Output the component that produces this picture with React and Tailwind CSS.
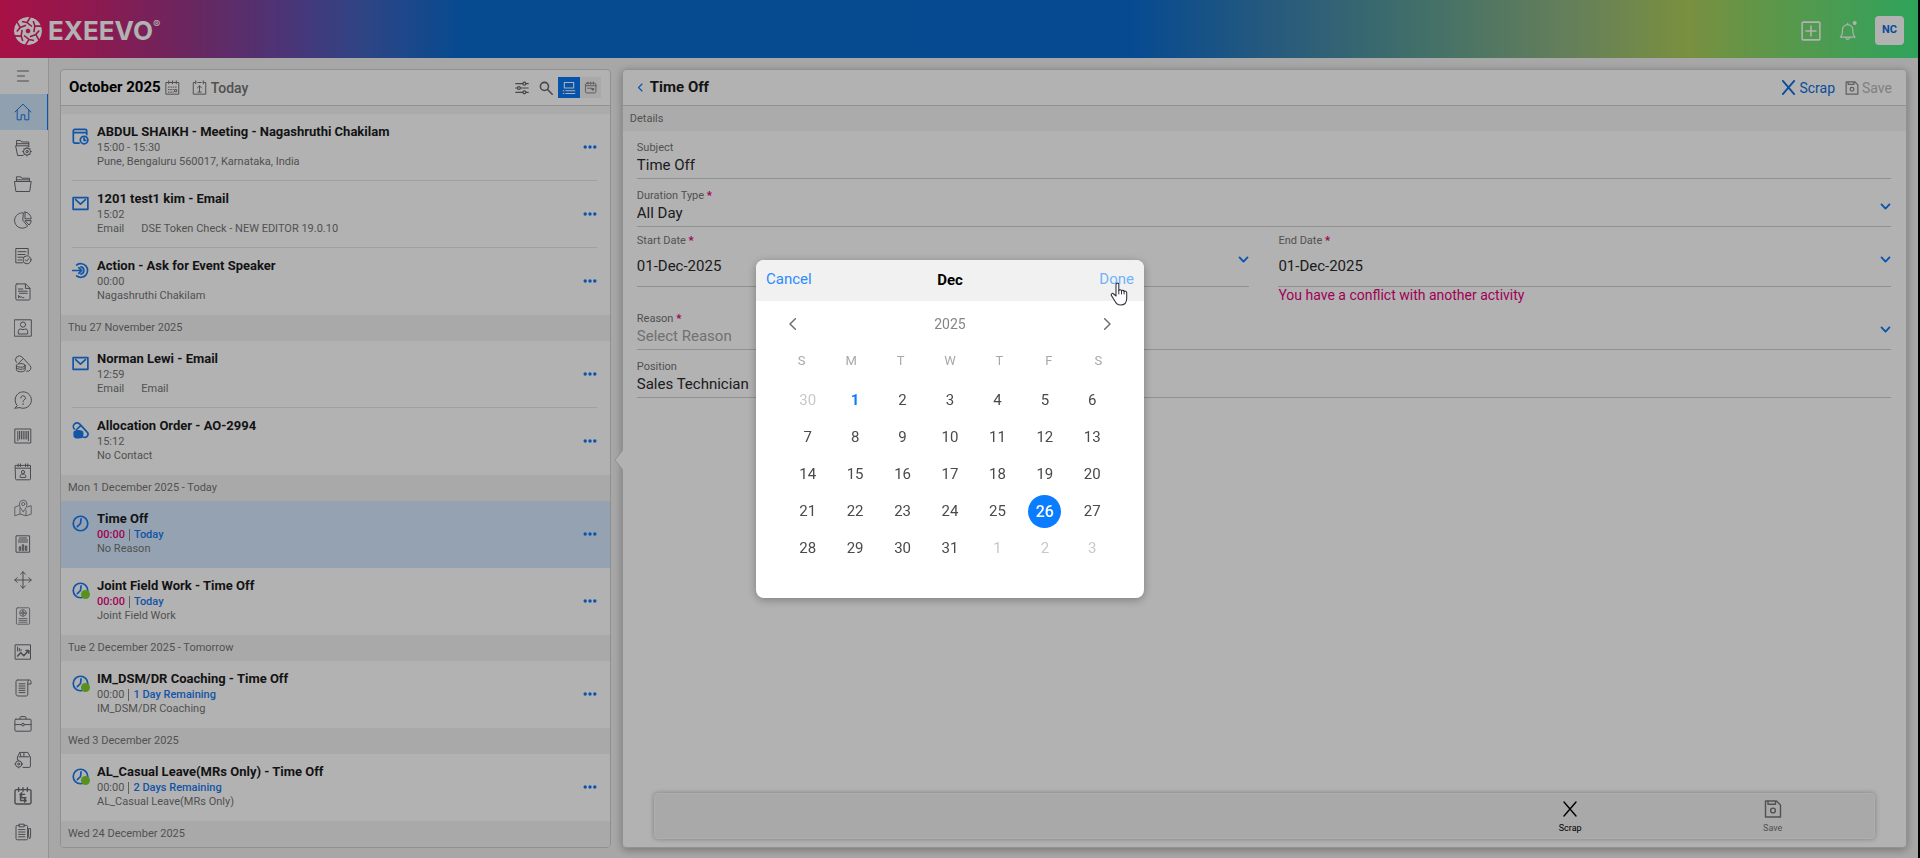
import React from 'react';

const navItems = [
  {
    label: 'Home',
    active: true,
    icon: <path d="M1 9 9 1.2 17 9M3.2 7.2v9.6h4v-5h3.6v5h4V7.2" />,
  },
  {
    label: 'Folder settings',
    icon: (
      <>
        <path d="M9 16.5H3.6L1.6 6.8h13.2M2.6 6.5v-5h4l1 1.5h7.2v5M2.6 4.7h12" />
        <circle cx="13" cy="12.6" r="3.6" />
        <circle cx="13" cy="12.6" r="1.2" />
        <path d="M13 8.2v1M13 16v1M8.6 12.6h1M16.4 12.6h1M10 9.6l.7.7M16 9.6l-.7.7M10 15.6l.7-.7M16 15.6l-.7-.7" />
      </>
    ),
  },
  {
    label: 'Folders',
    icon: <path d="M.8 6.5h16.4l-1.5 10H2.3zM2.4 6.5V1.8h4.4l1 1.4h7.6v3.3M2.4 4.8h13" />,
  },
  {
    label: 'Analytics',
    icon: (
      <>
        <path d="M9 1.8A7.7 7.7 0 1 0 13.6 15L9 9.5z" />
        <path d="M11 1v6.8h6.2A7 7 0 0 0 11 1zM11.4 9.6h5.8a7 7 0 0 1-1.8 4.2z" />
      </>
    ),
  },
  {
    label: 'Approvals',
    icon: (
      <>
        <path d="M8.5 15.8H1.8V1.5h12.4v6M4 4.7h8M4 7.5h7M4 10.2h5M4 13h3.6" />
        <circle cx="13" cy="12.8" r="4" />
        <path d="m11.3 12.8 1.3 1.4 2.3-2.7" />
      </>
    ),
  },
  {
    label: 'Contracts',
    icon: (
      <path d="M3 .9h8.6L16 5.2v10.6a1.2 1.2 0 0 1-1.2 1.2H3a1.2 1.2 0 0 1-1.2-1.2V2.1A1.2 1.2 0 0 1 3 .9zM11.4 1v4.4H16M4.4 6h4.4M4.4 8.2h8.8M5.5 10.3h7.7M4.6 14.8v-2.4l1.6 2.2.9-1.2 1 1.2h1.8" />
    ),
  },
  {
    label: 'Contacts',
    icon: (
      <>
        <path d="M.7.8h16.6v16.4H.7z" />
        <circle cx="9" cy="5.6" r="2.6" />
        <path d="M4.3 14.6v-2.3a2.5 2.5 0 0 1 2.5-2.4c.8.9 3.6.9 4.4 0a2.5 2.5 0 0 1 2.5 2.4v2.3z" />
      </>
    ),
  },
  {
    label: 'Products',
    icon: (
      <>
        <path d="M2.4 7.4a3.4 3.4 0 0 1 5.8-5.2l7.6 8.2a3.4 3.4 0 0 1-3.2 5.8M4.6 8.2l4.6-4.4" />
        <ellipse cx="6.8" cy="10.4" rx="4.4" ry="1.8" />
        <path d="M2.4 10.4v4.4c0 2.6 8.8 2.6 8.8 0v-4.4M2.4 12.6c0 2.4 8.8 2.4 8.8 0" />
      </>
    ),
  },
  {
    label: 'Enquiries',
    icon: (
      <>
        <path d="M3 14.4A8.2 8.2 0 1 1 6 16.6L1 17.2z" />
        <path d="M6.8 7a2.3 2.3 0 1 1 3.4 2c-.8.5-1.1.9-1.1 1.8M9.1 12.6v1" />
      </>
    ),
  },
  {
    label: 'Inventory',
    icon: <path d="M1.2 2h15.6v14H1.2zM3.8 4.4v9.2M5.6 4.4v7.6M7.4 4.4v7.6M9.2 4.4v7.6M11 4.4v7.6M12.8 4.4v7.6M14.4 4.4v9.2" />,
  },
  {
    label: 'Attendees',
    icon: (
      <>
        <path d="M1.5 2.4h15v13.4a1 1 0 0 1-1 1h-13a1 1 0 0 1-1-1zM1.5 5.2h15M4.2.9v2.6M6.4.9v2.6M11.6.9v2.6M13.8.9v2.6" />
        <circle cx="9" cy="9" r="1.6" />
        <path d="M6.2 14v-.8c0-1.2.8-2 1.6-2h2.4c.8 0 1.6.8 1.6 2v.8z" />
      </>
    ),
  },
  {
    label: 'Map',
    light: true,
    icon: (
      <>
        <path d="M5 6.6 .8 8v8.8L6 15l6 1.8 5.2-1.6V6.6L13.5 8M6 9v6M12 11v5.6" />
        <path d="M9.2 12.6C7 9.8 5.4 7.8 5.4 5a3.8 3.8 0 0 1 7.6 0c0 2.8-1.6 4.8-3.8 7.6z" />
        <circle cx="9.2" cy="5" r="1.6" />
      </>
    ),
  },
  {
    label: 'Reports',
    icon: <path d="M2.4.8h13.2v16.4H2.4zM5.5 3h7M4.5 5h9M4.5 7h9M5.2 15v-3.2h1.4V15zM8.3 15V9.8h1.4V15zM11.4 15v-4h1.4v4z" />,
  },
  {
    label: 'Territory',
    icon: <path d="M9 .8v16.4M.8 9h16.4M6.6 3.2 9 .8l2.4 2.4M6.6 14.8 9 17.2l2.4-2.4M3.2 6.6.8 9l2.4 2.4M14.8 6.6 17.2 9l-2.4 2.4" />,
  },
  {
    label: 'Directory',
    light: true,
    icon: (
      <>
        <rect x="2.4" y=".8" width="13.2" height="16.4" rx="1" />
        <circle cx="9" cy="6" r="3.3" />
        <circle cx="9" cy="6" r="1.3" />
        <path d="M9 2.7v6.6M5.7 6h6.6M5 11.6h8M5 13.4h8M5 15.2h8" />
      </>
    ),
  },
  {
    label: 'Insights',
    icon: (
      <>
        <path d="M1.5 1.8h15v14.4h-15zM3.6 4v4M5.3 5.4V8M7 6.5V8" />
        <path strokeWidth="1.5" d="m3.6 13 3.2-3.2 3 3 4.8-5.2M12 7.4h2.8v2.8" />
      </>
    ),
  },
  {
    label: 'Scripts',
    icon: <path d="M3.4 1h11.4M3.4 1C2.4 1 2 1.8 2 2.6v12c0 1.6.8 2.4 2 2.4h8.2c1.2 0 1.6-.8 1.6-2V2.8c0-1 .6-1.8 1.6-1.8s1.6.8 1.6 2v2h-3.2M5 4.8h6M5 7h6M5 9.2h6M5 11.4h6M5 13.6h6" />,
  },
  {
    label: 'Portfolio',
    icon: (
      <>
        <rect x=".9" y="4.2" width="16.2" height="12" rx="1" />
        <path d="M6 4V2.6c0-.6.4-1 1-1h4c.6 0 1 .4 1 1V4M1 9.6h6.6M10.4 9.6H17" />
        <circle cx="9" cy="9.6" r="1.4" />
      </>
    ),
  },
  {
    label: 'Orders',
    icon: (
      <>
        <path d="M3.4 9V6l2.4-4.6h8L16.4 6v9.2c0 .8-.4 1.2-1.2 1.2H9M5 5.8h10M5.8 1.4 7 5.6M9.9 1.4v4.2" />
        <circle cx="4.7" cy="13" r="3.2" />
        <circle cx="4.7" cy="13" r="1" />
        <path d="M4.7 9v.8M4.7 16.2v.8M.8 13h.8M7.8 13h.8" />
      </>
    ),
  },
  {
    label: 'Planner',
    icon: (
      <path
        strokeWidth="1.4"
        d="M2.4 2.6h13.2c.8 0 1.4.6 1.4 1.4v11.6c0 .8-.6 1.4-1.4 1.4H2.4c-.8 0-1.4-.6-1.4-1.4V4c0-.8.6-1.4 1.4-1.4zM4.6.8v3.4M9 .8v3.4M13.4.8v3.4M6 7.4h4.6M7.8 5.8 6 7.4l1.8 1.6M6.5 7.6v3.2H12M6.5 10.5v3H12M10.6 12l1.6 1.5-1.6 1.5"
      />
    ),
  },
  {
    label: 'Surveys',
    icon: (
      <>
        <path d="M5.4 2.4H3.2c-.8 0-1.2.4-1.2 1.2v12c0 .8.4 1.2 1.2 1.2h9.2c.8 0 1.2-.4 1.2-1.2v-12c0-.8-.4-1.2-1.2-1.2h-2.2M5.4 1.2h4.8v2.6H5.4zM4.6 6.6H11M4.6 9H11M4.6 11.4H11M4.6 13.8H11" />
        <path d="M14.8 5.6h1.8v8.2l-.9 2-.9-2z" />
      </>
    ),
  },
];

const itemIcons = {
  meeting: (
    <>
      <path d="M7.5 16H3a1.6 1.6 0 0 1-1.6-1.6V3A1.6 1.6 0 0 1 3 1.4h11A1.6 1.6 0 0 1 15.6 3v4M1.6 5h14" />
      <circle cx="12.8" cy="12.8" r="4" />
      <path d="M12.8 10.6v2.6h1.8" />
    </>
  ),
  email: <path d="M1.2 2.8h15.6v12.4H1.2zM3.8 5l5.2 4.6L14.2 5" />,
  action: <path d="M5 3.2a7.2 7.2 0 1 1 0 11.6M9.5 5.2a3.9 3.9 0 0 1 0 7.6M.8 9h9.4M7.2 6 10.2 9l-3 3" />,
  order: (
    <>
      <path d="M2.4 7.4a3.4 3.4 0 0 1 5.8-5.2l7.6 8.2a3.4 3.4 0 0 1-3.2 5.8M4.6 8.2l4.6-4.4" />
      <path fill="currentColor" d="M2.4 11.2c0-2.6 8.8-2.6 8.8 0v4c0 2-8.8 2-8.8 0z" />
    </>
  ),
  timeoff: (
    <>
      <circle cx="9" cy="9" r="7.7" />
      <path d="M9.6 4.2 9 9l-3.4 3.4" />
    </>
  ),
};

const agenda = [
  {
    heading: null,
    items: [
      { icon: 'meeting', title: 'ABDUL SHAIKH - Meeting - Nagashruthi Chakilam', time: '15:00 - 15:30', note: ['Pune, Bengaluru 560017, Karnataka, India'] },
      { icon: 'email', title: '1201 test1 kim - Email', time: '15:02', note: ['Email', 'DSE Token Check - NEW EDITOR 19.0.10'] },
      { icon: 'action', title: 'Action - Ask for Event Speaker', time: '00:00', note: ['Nagashruthi Chakilam'] },
    ],
  },
  {
    heading: 'Thu 27 November 2025',
    items: [
      { icon: 'email', title: 'Norman Lewi - Email', time: '12:59', note: ['Email', 'Email'] },
      { icon: 'order', title: 'Allocation Order - AO-2994', time: '15:12', note: ['No Contact'] },
    ],
  },
  {
    heading: 'Mon 1 December 2025 - Today',
    items: [
      { icon: 'timeoff', title: 'Time Off', time: '00:00', late: true, due: 'Today', note: ['No Reason'], selected: true },
      { icon: 'timeoff', dot: true, title: 'Joint Field Work - Time Off', time: '00:00', late: true, due: 'Today', note: ['Joint Field Work'] },
    ],
  },
  {
    heading: 'Tue 2 December 2025 - Tomorrow',
    items: [
      { icon: 'timeoff', dot: true, title: 'IM_DSM/DR Coaching - Time Off', time: '00:00', due: '1 Day Remaining', note: ['IM_DSM/DR Coaching'] },
    ],
  },
  {
    heading: 'Wed 3 December 2025',
    items: [
      { icon: 'timeoff', dot: true, title: 'AL_Casual Leave(MRs Only) - Time Off', time: '00:00', due: '2 Days Remaining', note: ['AL_Casual Leave(MRs Only)'] },
    ],
  },
  { heading: 'Wed 24 December 2025', items: [] },
];

const Icon = ({ className = 'size-[18px]', strokeWidth = 1, children }) => (
  <svg
    viewBox="0 0 18 18"
    fill="none"
    stroke="currentColor"
    strokeWidth={strokeWidth}
    strokeLinecap="round"
    strokeLinejoin="round"
    className={`shrink-0 ${className}`}
    aria-hidden="true"
  >
    {children}
  </svg>
);

const CrossIcon = ({ className, strokeWidth }) => (
  <Icon className={className} strokeWidth={strokeWidth}>
    <path d="m3 2 12 14M15 2 3 16" />
  </Icon>
);

const SaveIcon = ({ className, strokeWidth }) => (
  <Icon className={className} strokeWidth={strokeWidth}>
    <path d="M1.5 1h11l4 4v12h-15zM4 1.2v3h7.5v-3" />
    <circle cx="9" cy="10.5" r="2.4" />
  </Icon>
);

const ChevronDown = ({ className }) => (
  <Icon className={`size-[11px] text-[#0d7af7] ${className}`} strokeWidth={3}>
    <path d="m2.5 5.5 6.5 7 6.5-7" />
  </Icon>
);

const Logo = () => (
  <div className="flex items-center gap-[6px] text-white">
    <svg viewBox="-14 -14 28 28" className="size-7" aria-hidden="true">
      <mask id="blades">
        <circle r="14" fill="#fff" />
        <g fill="none" stroke="#000" strokeWidth="1.6">
          {[0, 60, 120, 180, 240, 300].map((angle) => (
            <path key={angle} transform={`rotate(${angle})`} d="M3-15-1-8.500 4-4.500M-1-8.500-6-9.500" />
          ))}
        </g>
        <path d="M0-2.500 2.200-1.200V1.200L0 2.500-2.200 1.200V-1.200z" fill="#000" />
      </mask>
      <circle r="14" fill="currentColor" mask="url(#blades)" />
    </svg>
    <span className="font-['Inter',sans-serif] text-[26px] leading-7 font-bold">
      EXEEVO<sup className="text-[11px] font-normal -top-3">®</sup>
    </span>
  </div>
);

const Header = () => (
  <header className="flex h-[58px] items-center justify-between px-[14px] pt-[3px] bg-[linear-gradient(90deg,#f01a64_0%,#d3226f_4%,#973889_10%,#6b4cab_15%,#4363be_19%,#0a6bce_24%,#0a6bd0_59%,#3c83b1_67%,#5ea097_74%,#92b781_82%,#aece5b_88%,#77dc70_94%,#43ea83_100%)]">
    <Logo />
    <div className="flex items-center gap-[17px] text-white">
      <button type="button" aria-label="Create">
        <Icon className="size-5" strokeWidth={1.4}>
          <rect x="1" y="1" width="16" height="16" rx="1" />
          <path d="M9 4.5v9M4.5 9h9" />
        </Icon>
      </button>
      <button type="button" aria-label="Notifications">
        <Icon className="size-5">
          <path d="M2 14.5c1.5-1.2 2-2.4 2-4.5V8a4.7 4.7 0 0 1 9.4 0v2c0 2.1.5 3.3 2 4.5zM7 15c.3 2 3.1 2 3.4 0M8.7 3.2V2" />
          <circle cx="15" cy="1.8" r="1.8" fill="currentColor" stroke="none" />
        </Icon>
      </button>
      <button type="button" className="h-[29px] w-[29px] rounded-[4px] bg-white text-[11px] font-bold text-[#0d6be0]">
        NC
      </button>
    </div>
  </header>
);

const Sidebar = () => (
  <nav className="w-[49px] shrink-0 border-r border-[#d5d5d5] bg-[#fcfbfd] text-[#6b6b70]">
    <button type="button" aria-label="Toggle menu" className="flex h-9 w-full items-center pl-[14px]">
      <Icon>
        <path d="M3.5 4h11M3.5 9h7M3.5 14h11" />
      </Icon>
    </button>
    {navItems.map((item) => (
      <a
        key={item.label}
        href="#"
        aria-label={item.label}
        className={`flex h-9 items-center pl-[14px] ${
          item.active ? 'border-r border-[#0d7af7] bg-[#cfe5fb] text-[#1a74e6]' : ''
        } ${item.light ? 'text-[#8c8c90]' : ''}`}
      >
        <Icon>{item.icon}</Icon>
      </a>
    ))}
  </nav>
);

const AgendaItem = ({ item, divided }) => (
  <li className={`flex h-[67px] pr-[13px] pl-[11px] ${item.selected ? 'bg-[#d6e9fe]' : ''}`}>
    <div className={`flex flex-1 items-center border-b ${divided ? 'border-[#e6e6e6]' : 'border-transparent'}`}>
      <div className="relative mt-[14px] mr-2 self-start text-[#1a7af0]">
        <Icon className="size-[17px]" strokeWidth={1.8}>{itemIcons[item.icon]}</Icon>
        {item.dot && <span className="absolute -right-px bottom-0 size-[9px] rounded-full bg-[#7fd02a]" />}
      </div>
      <div className="flex-1 self-start pt-[10px]">
        <h3 className="text-[13px] leading-4 font-bold text-[#1c1c1e]">{item.title}</h3>
        <p className="flex items-center gap-1 text-[11px] leading-[15px] text-[#757575]">
          <span className={item.late ? 'font-medium text-[#e6007e]' : ''}>{item.time}</span>
          {item.due && <span className="border-l border-[#8a8a8a] pl-1 leading-3 font-medium text-[#1a7af0]">{item.due}</span>}
        </p>
        <p className="flex gap-[17px] text-[11px] leading-[14px] text-[#757575]">
          {item.note.map((text, i) => (
            <span key={i}>{text}</span>
          ))}
        </p>
      </div>
      <button type="button" aria-label={`More for ${item.title}`} className="text-[#0d7af7]">
        <svg viewBox="0 0 14 4" className="h-1 w-[14px]" fill="currentColor" aria-hidden="true">
          <circle cx="2.2" cy="2" r="1.7" />
          <circle cx="7" cy="2" r="1.7" />
          <circle cx="11.8" cy="2" r="1.7" />
        </svg>
      </button>
    </div>
  </li>
);

const AgendaPanel = () => (
  <section className="overflow-hidden rounded-[4px] border border-[#cfcfcf] bg-white">
    <div className="flex h-9 items-center border-b border-[#cfcfcf] pr-[9px] pl-2">
      <h2 className="text-[15px] font-bold text-black">October 2025</h2>
      <button type="button" aria-label="Pick month" className="ml-1 text-[#757575]">
        <Icon className="size-[15px]" strokeWidth={1.2}>
          <path d="M1.5 3h15v14h-15zM4.5 1v3.5M9 1v3.5M13.5 1v3.5" />
          <path strokeDasharray="1 1.8" d="M4 8.5h10M4 11.5h6M4 14.5h6" />
          <path d="M12 11.5h2v2.5h-2z" />
        </Icon>
      </button>
      <button type="button" className="ml-3 flex items-center gap-1 text-sm font-medium text-[#757575]">
        <Icon className="size-[15px]" strokeWidth={1.2}>
          <path d="M4.5 3h-3v14h15V3h-3M4.5 1v3.5M13.5 1v3.5M7 3h4M9 7v7M6.5 9.5 9 7l2.500 2.500M7 14.500h4" />
        </Icon>
        Today
      </button>
      <div className="ml-auto flex items-center text-[#666]">
        <button type="button" aria-label="Filters" className="mr-[10px]">
          <Icon className="size-[14px]" strokeWidth={1.6}>
            <path d="M1 3.5h9M14 3.5h3M1 9h2M7 9h10M1 14.5h9M14 14.5h3" />
            <circle cx="12" cy="3.5" r="1.9" />
            <circle cx="5" cy="9" r="1.9" />
            <circle cx="12" cy="14.5" r="1.9" />
          </Icon>
        </button>
        <button type="button" aria-label="Search" className="mr-[5px]">
          <Icon className="size-[14px]" strokeWidth={2}>
            <circle cx="7" cy="7" r="5.2" />
            <path d="m11 11 6 6" />
          </Icon>
        </button>
        <button type="button" aria-label="List view" className="flex h-[21px] w-[22px] items-center justify-center bg-[#0a78f5] text-white">
          <Icon className="size-[14px]" strokeWidth={1.4}>
            <path d="M3 2h12v7H3zM1.5 12.5h1M5 12.5h11.5M1.5 16h1M5 16h11.5" />
          </Icon>
        </button>
        <button type="button" aria-label="Calendar view" className="flex h-[21px] w-[21px] items-center justify-center bg-[#f2f2f2] text-[#808080]">
          <Icon className="size-[13px]" strokeWidth={1.3}>
            <rect x="2" y="3" width="14.5" height="13.5" rx="2" />
            <path d="M2 6.5h14.5M5.5 1.5v3M9.2 1.5v3M13 1.5v3M5 10h6" />
            <path fill="currentColor" d="M11.5 10.5h2v2h-2z" />
          </Icon>
        </button>
      </div>
    </div>
    <div className="h-2 bg-[#f5f5f5]" />
    {agenda.map((group, g) => (
      <div key={g}>
        {group.heading && (
          <h4 className="h-[26px] bg-[#f3f3f3] pl-[7px] text-[11px] leading-[26px] text-[#757575]">{group.heading}</h4>
        )}
        <ul>
          {group.items.map((item, i) => (
            <AgendaItem key={item.title} item={item} divided={i < group.items.length - 1 && !item.selected} />
          ))}
        </ul>
      </div>
    ))}
  </section>
);

const Field = ({ id, label, required, value, type = 'text', tall }) => (
  <div className={`flex items-center border-b border-[#cfcfcf] ${tall ? 'pt-[7px] pb-[10px]' : 'pt-[10px] pb-[3px]'}`}>
    <div className="flex flex-1 flex-col">
      <label htmlFor={id} className="text-[11px] leading-[14px] text-[#757575]">
        {label} {required && <span className="font-black text-[#e6007e]">*</span>}
      </label>
      {type === 'select' ? (
        <select
          id={id}
          className={`h-5 w-full appearance-none bg-transparent text-[15px] leading-5 outline-none ${
            value === 'Select Reason' ? 'text-[#a3a3a3]' : 'text-[#2a2a2c]'
          }`}
        >
          <option>{value}</option>
        </select>
      ) : (
        <input
          id={id}
          readOnly
          value={value}
          className={`h-5 w-full bg-transparent text-[15px] leading-5 text-[#2a2a2c] outline-none ${tall ? 'mt-2' : ''}`}
        />
      )}
    </div>
    {type !== 'text' && <ChevronDown className={tall ? 'mt-2' : ''} />}
  </div>
);

const DetailsPanel = () => (
  <section className="relative flex flex-col rounded-[4px] border border-[#d2d2d2] bg-white shadow-[0_2px_8px_rgba(0,0,0,0.3)]">
    {/* Pointer towards the list */}
    <svg viewBox="0 0 9 20" className="absolute top-[380px] -left-[9px] h-5 w-[9px]" aria-hidden="true">
      <path d="M9 0 1 10l8 10z" fill="#fff" />
      <path d="M9 0 1 10l8 10" fill="none" stroke="#d2d2d2" />
    </svg>

    <div className="flex h-9 items-center justify-between border-b border-[#cfcfcf] px-[14px]">
      <div className="flex items-center gap-[6px]">
        <button type="button" aria-label="Back" className="text-[#0d7af7]">
          <Icon className="h-[11px] w-[7px]" strokeWidth={3}>
            <path d="M13 0 4 9l9 9" />
          </Icon>
        </button>
        <h2 className="text-[15px] font-bold text-[#1c1c1e]">Time Off</h2>
      </div>
      <div className="flex items-center gap-[10px] text-sm">
        <button type="button" className="flex items-center gap-[2px] text-[#0d6fe0]">
          <CrossIcon className="size-[17px]" strokeWidth={2} />
          Scrap
        </button>
        <button type="button" disabled className="flex items-center gap-[3px] text-[#b8b8b8]">
          <span className="text-[#8a8a8a]"><SaveIcon className="size-[14px]" strokeWidth={1.6} /></span>
          Save
        </button>
      </div>
    </div>
    <h3 className="h-[25px] bg-[#f5f5f5] pl-[7px] text-[11px] leading-[25px] text-[#757575]">Details</h3>

    <form className="flex-1 pr-[15px] pl-[14px]">
      <Field id="subject" label="Subject" value="Time Off" />
      <Field id="duration" label="Duration Type" required type="select" value="All Day" />
      <div className="grid grid-cols-2 gap-x-[29px]">
        <Field id="start" label="Start Date" required type="date" tall value="01-Dec-2025" />
        <Field id="end" label="End Date" required type="date" tall value="01-Dec-2025" />
        <p className="col-start-2 h-[15px] text-sm leading-4 text-[#e6007e]">You have a conflict with another activity</p>
      </div>
      <Field id="reason" label="Reason" required type="select" value="Select Reason" />
      <Field id="position" label="Position" value="Sales Technician" />
    </form>

    <div className="mx-[31px] mb-2 grid h-[46px] grid-cols-6 rounded-[4px] border border-[#fafafa] bg-[#f3f3f3] pt-[2px] pl-1 text-[9px] leading-3 shadow-[0_0_5px_rgba(0,0,0,0.3)]">
      <button type="button" className="col-start-5 flex flex-col items-center justify-center gap-1 text-black">
        <CrossIcon className="size-[18px]" strokeWidth={1.4} />
        Scrap
      </button>
      <button type="button" disabled className="flex flex-col items-center justify-center gap-1 text-[#757575]">
        <SaveIcon className="size-[18px]" strokeWidth={1.4} />
        Save
      </button>
    </div>
  </section>
);

const monthDays = [
  { day: 30, outside: true },
  ...Array.from({ length: 31 }, (_, i) => ({ day: i + 1, today: i === 0, selected: i === 25 })),
  { day: 1, outside: true },
  { day: 2, outside: true },
  { day: 3, outside: true },
];

const dayClass = ({ outside, today, selected }) => {
  if (selected) return 'size-[33px] rounded-full bg-[#0a7cff] text-base font-medium text-white';
  if (today) return 'size-[33px] text-[15px] font-bold text-[#0a7cff]';
  if (outside) return 'size-[33px] text-[15px] text-[#c8c8c8]';
  return 'size-[33px] text-[15px] text-[#4a4a4a]';
};

const DatePicker = () => (
  <div className="fixed inset-0 z-10 flex items-center justify-center bg-black/30 pr-5">
    <div role="dialog" aria-label="Choose end date" className="relative h-[338px] w-[388px] overflow-hidden rounded-lg bg-white shadow-[0_2px_10px_rgba(0,0,0,0.3)]">
      <div className="grid h-[41px] grid-cols-3 items-center bg-[#f1f1f1] px-[10px] text-[15px] leading-5">
        <button type="button" className="pb-1 text-left text-[#2a8cff]">Cancel</button>
        <h2 className="pb-[2px] text-center font-bold text-black">Dec</h2>
        <button type="button" className="pb-1 text-right text-[#72b1fb]">Done</button>
      </div>
      <div className="mt-3 flex h-[22px] items-center justify-between px-[31px] text-sm text-[#858585]">
        <button type="button" aria-label="Previous month" className="text-[#6e6e6e]">
          <Icon className="size-3" strokeWidth={2.2}>
            <path d="M12.5 1 4.5 9l8 8" />
          </Icon>
        </button>
        2025
        <button type="button" aria-label="Next month" className="text-[#6e6e6e]">
          <Icon className="size-3" strokeWidth={2.2}>
            <path d="m5.5 1 8 8-8 8" />
          </Icon>
        </button>
      </div>
      <div className="mt-4 grid grid-cols-7 px-[21px] text-center text-[13px] leading-5 text-[#a8a8a8]">
        {['S', 'M', 'T', 'W', 'T', 'F', 'S'].map((d, i) => (
          <span key={i}>{d}</span>
        ))}
      </div>
      <div className="mt-[11px] grid grid-cols-7 px-7">
        {monthDays.map((d, i) => (
          <div key={i} className="flex h-[37px] items-center justify-center">
            <button type="button" className={dayClass(d)}>{d.day}</button>
          </div>
        ))}
      </div>

      {/* Hand pointer over the Done button */}
      <svg viewBox="0 0 18 24" className="pointer-events-none absolute top-[22px] right-[16px] h-6 w-[18px]" aria-hidden="true">
        <path
          d="M6 14V2.5C6 .6 8.8.6 8.8 2.5v6c.3-1.2 2.6-1 2.7.4.5-1 2.5-.7 2.6.7.7-.8 2.6-.4 2.6 1.2v5.4c0 4-2 6.800-6.200 6.800-3 0-4.500-1.500-5.800-4.200l-3.300-5.400c-.8-1.500 1.200-2.700 2.300-1.400z"
          fill="#fff"
          stroke="#333344"
          strokeWidth="1.1"
          strokeLinejoin="round"
        />
        <path d="M8.8 8.5V12M11.5 9v3M14.1 9.8V12" stroke="#333344" strokeLinecap="round" />
      </svg>
    </div>
  </div>
);

export default function App() {
  return (
    <div className="min-h-screen bg-black pr-[2px] font-['Roboto',sans-serif]">
      <div className="flex min-h-screen flex-col bg-[#f0f0f0]">
        <Header />
        <div className="flex flex-1">
          <Sidebar />
          <main className="grid flex-1 grid-cols-[3fr_7fr] gap-[11px] pt-[11px] pr-[11px] pb-[10px] pl-[11px]">
            <AgendaPanel />
            <DetailsPanel />
          </main>
        </div>
      </div>
      <DatePicker />
    </div>
  );
}
